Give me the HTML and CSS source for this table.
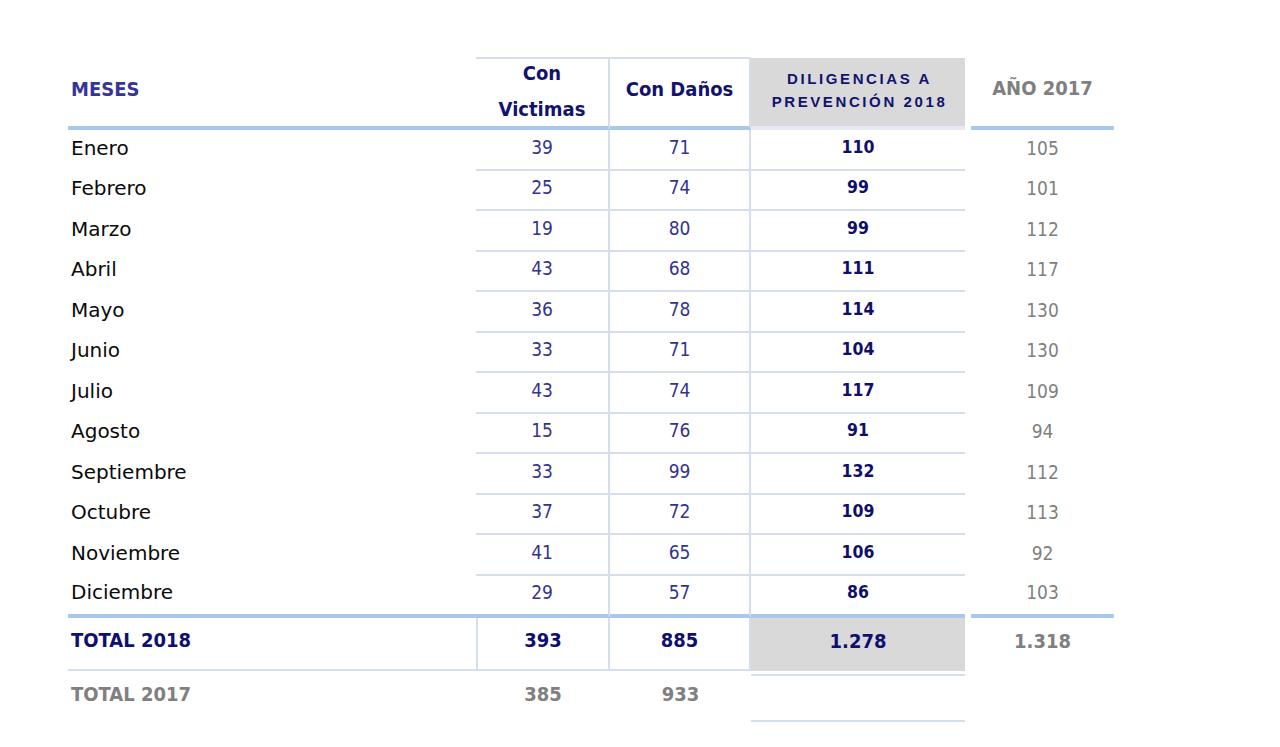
FILE: index.html
```html
<!DOCTYPE html>
<html lang="es">
<head>
<meta charset="utf-8">
<title>Diligencias a prevención 2018</title>
<link rel="stylesheet" href="styles.css">
</head>
<body>
<div class="sheet">
  <div class="grid">
    <div class="c hd meses-h">MESES</div>
    <div class="c hd vic-h">Con<br>Victimas</div>
    <div class="c hd dan-h">Con Daños</div>
    <div class="c hd dil-h">DILIGENCIAS A<br>PREVENCIÓN 2018</div>
    <div class="gap"></div>
    <div class="c hd ano-h">AÑO 2017</div>

    <div class="c row mes">Enero</div><div class="c row vic">39</div><div class="c row dan">71</div><div class="c row dil">110</div><div class="gap"></div><div class="c row ano">105</div>
    <div class="c row mes">Febrero</div><div class="c row vic">25</div><div class="c row dan">74</div><div class="c row dil">99</div><div class="gap"></div><div class="c row ano">101</div>
    <div class="c row mes">Marzo</div><div class="c row vic">19</div><div class="c row dan">80</div><div class="c row dil">99</div><div class="gap"></div><div class="c row ano">112</div>
    <div class="c row mes">Abril</div><div class="c row vic">43</div><div class="c row dan">68</div><div class="c row dil">111</div><div class="gap"></div><div class="c row ano">117</div>
    <div class="c row mes">Mayo</div><div class="c row vic">36</div><div class="c row dan">78</div><div class="c row dil">114</div><div class="gap"></div><div class="c row ano">130</div>
    <div class="c row mes">Junio</div><div class="c row vic">33</div><div class="c row dan">71</div><div class="c row dil">104</div><div class="gap"></div><div class="c row ano">130</div>
    <div class="c row mes">Julio</div><div class="c row vic">43</div><div class="c row dan">74</div><div class="c row dil">117</div><div class="gap"></div><div class="c row ano">109</div>
    <div class="c row mes">Agosto</div><div class="c row vic">15</div><div class="c row dan">76</div><div class="c row dil">91</div><div class="gap"></div><div class="c row ano">94</div>
    <div class="c row mes">Septiembre</div><div class="c row vic">33</div><div class="c row dan">99</div><div class="c row dil">132</div><div class="gap"></div><div class="c row ano">112</div>
    <div class="c row mes">Octubre</div><div class="c row vic">37</div><div class="c row dan">72</div><div class="c row dil">109</div><div class="gap"></div><div class="c row ano">113</div>
    <div class="c row mes">Noviembre</div><div class="c row vic">41</div><div class="c row dan">65</div><div class="c row dil">106</div><div class="gap"></div><div class="c row ano">92</div>
    <div class="c row last mes">Diciembre</div><div class="c row last vic">29</div><div class="c row last dan">57</div><div class="c row last dil">86</div><div class="gap"></div><div class="c row last ano">103</div>

    <div class="c tot mes">TOTAL 2018</div><div class="c tot vic">393</div><div class="c tot dan">885</div><div class="c tot dil">1.278</div><div class="gap"></div><div class="c tot ano">1.318</div>

    <div class="c prev mes">TOTAL 2017</div><div class="c prev vic">385</div><div class="c prev dan">933</div><div class="c prev dil"></div><div class="gap"></div><div class="c prev ano"></div>
  </div>
</div>
</body>
</html>
```

FILE: styles.css
```css
html, body {
  margin: 0;
  padding: 0;
  background: #ffffff;
}

.sheet {
  width: 1280px;
  height: 747px;
  padding: 57px 0 0 68px;
  box-sizing: border-box;
  overflow: hidden;
}

.grid {
  display: grid;
  grid-template-columns: 408px 134px 141px 214px 6px 143px;
  font-family: "DejaVu Sans Condensed", "DejaVu Sans", sans-serif;
  font-stretch: condensed;
}

.c {
  box-sizing: border-box;
  display: flex;
  align-items: center;
  justify-content: center;
  text-align: center;
}

/* ---------- header ---------- */
.hd {
  height: 73px;
  font-size: 20px;
  font-weight: bold;
  border-bottom: 4px solid #a9c9ec;
}

.meses-h {
  justify-content: flex-start;
  padding: 0 0 6px 3px;
  color: #34349a;
}

.vic-h {
  border-top: 2px solid #d6ddec;
  border-right: 2px solid #d6ddec;
  color: #12126f;
  line-height: 36px;
  padding-bottom: 4px;
}

.dan-h {
  border-top: 2px solid #d6ddec;
  border-right: 2px solid #d6ddec;
  color: #12126f;
  padding-bottom: 8px;
}

.dil-h {
  margin-top: 1px;
  height: 72px;
  background: #d9d9d9;
  background-clip: padding-box;
  border-bottom: 4px solid #e6eaf2;
  font-family: "Liberation Sans", Arial, sans-serif;
  font-stretch: normal;
  font-size: 15px;
  letter-spacing: 2.6px;
  line-height: 23px;
  color: #12126f;
  padding: 0 0 5px 3px;
}

.ano-h {
  color: #7f7f7f;
  padding-bottom: 8px;
}

/* ---------- body rows ---------- */
.row {
  height: 40.5px;
  padding-bottom: 5px;
  font-size: 19px;
}

.row.mes {
  justify-content: flex-start;
  padding-left: 3px;
  font-family: "DejaVu Sans", sans-serif;
  font-stretch: normal;
  font-size: 20px;
  color: #0a0a0a;
}

.row.vic,
.row.dan {
  color: #34348f;
  border-bottom: 2px solid #d6ddec;
  border-right: 2px solid #d6ddec;
}

.row.dil {
  color: #0f0f6b;
  font-weight: bold;
  font-size: 17.5px;
  border-bottom: 2px solid #d6ddec;
}

.row.ano {
  color: #7f7f7f;
}

.row.last {
  height: 42.5px;
  border-bottom: 4px solid #a9c9ec;
}

/* ---------- totals ---------- */
.tot {
  height: 53px;
  padding-bottom: 8px;
  font-size: 20px;
  font-weight: bold;
}

.tot.mes {
  justify-content: flex-start;
  padding-left: 3px;
  color: #0f0f72;
  border-bottom: 2px solid #d6ddec;
}

.tot.vic {
  color: #0f0f72;
  border-left: 2px solid #d6ddec;
  border-right: 2px solid #d6ddec;
  border-bottom: 2px solid #d6ddec;
}

.tot.dan {
  color: #0f0f72;
  border-right: 2px solid #d6ddec;
  border-bottom: 2px solid #d6ddec;
}

.tot.dil {
  color: #0f0f72;
  background: #d9d9d9;
}

.tot.ano {
  color: #7f7f7f;
  font-weight: bold;
}

.prev {
  height: 51px;
  padding-bottom: 5px;
  font-size: 20px;
  font-weight: bold;
  color: #808080;
}

.prev.mes {
  justify-content: flex-start;
  padding-left: 3px;
}

.prev.dil {
  margin-top: 3px;
  height: 48px;
  border-top: 2px solid #d6ddec;
  border-bottom: 2px solid #d6ddec;
}
```
